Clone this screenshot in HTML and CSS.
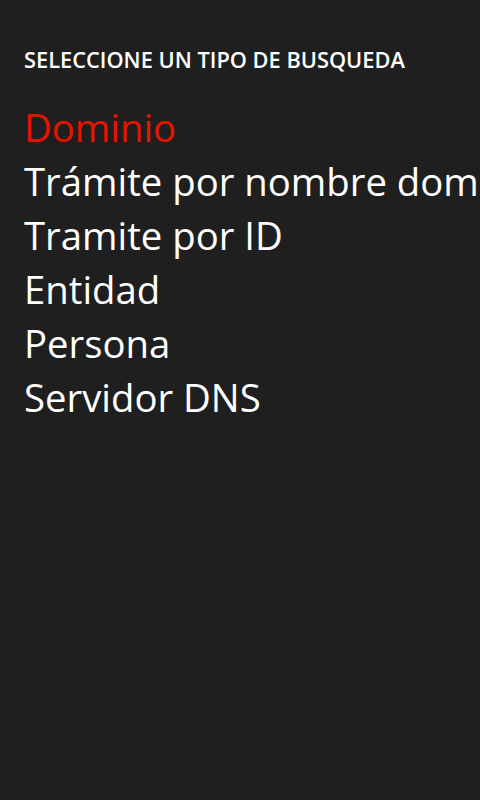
FILE: index.html
```html
<!DOCTYPE html>
<html lang="es">
<head>
<meta charset="utf-8">
<link rel="stylesheet" href="styles.css">
</head>
<body>
<div class="page">
  <h1 class="title">SELECCIONE UN TIPO DE BUSQUEDA</h1>
  <ul class="list">
    <li class="item selected">Dominio</li>
    <li class="item">Trámite por nombre dominio</li>
    <li class="item">Tramite por ID</li>
    <li class="item">Entidad</li>
    <li class="item">Persona</li>
    <li class="item">Servidor DNS</li>
  </ul>
</div>
</body>
</html>
```
FILE: styles.css
```css
html, body {
  margin: 0;
  padding: 0;
  background: #1f1f1f;
  width: 480px;
  height: 800px;
  overflow: hidden;
}
.page {
  font-family: "Open Sans", "Noto Sans", sans-serif;
  color: #ffffff;
  padding: 45px 0 0 24px;
}
.title {
  margin: 0;
  font-size: 21.8px;
  font-weight: 600;
  line-height: 30px;
}
.list {
  list-style: none;
  margin: 0;
  padding: 25px 0 0 0;
}
.item {
  font-size: 38.3px;
  line-height: 54px;
  white-space: nowrap;
  overflow: hidden;
}
.selected {
  color: #e51400;
}
```
